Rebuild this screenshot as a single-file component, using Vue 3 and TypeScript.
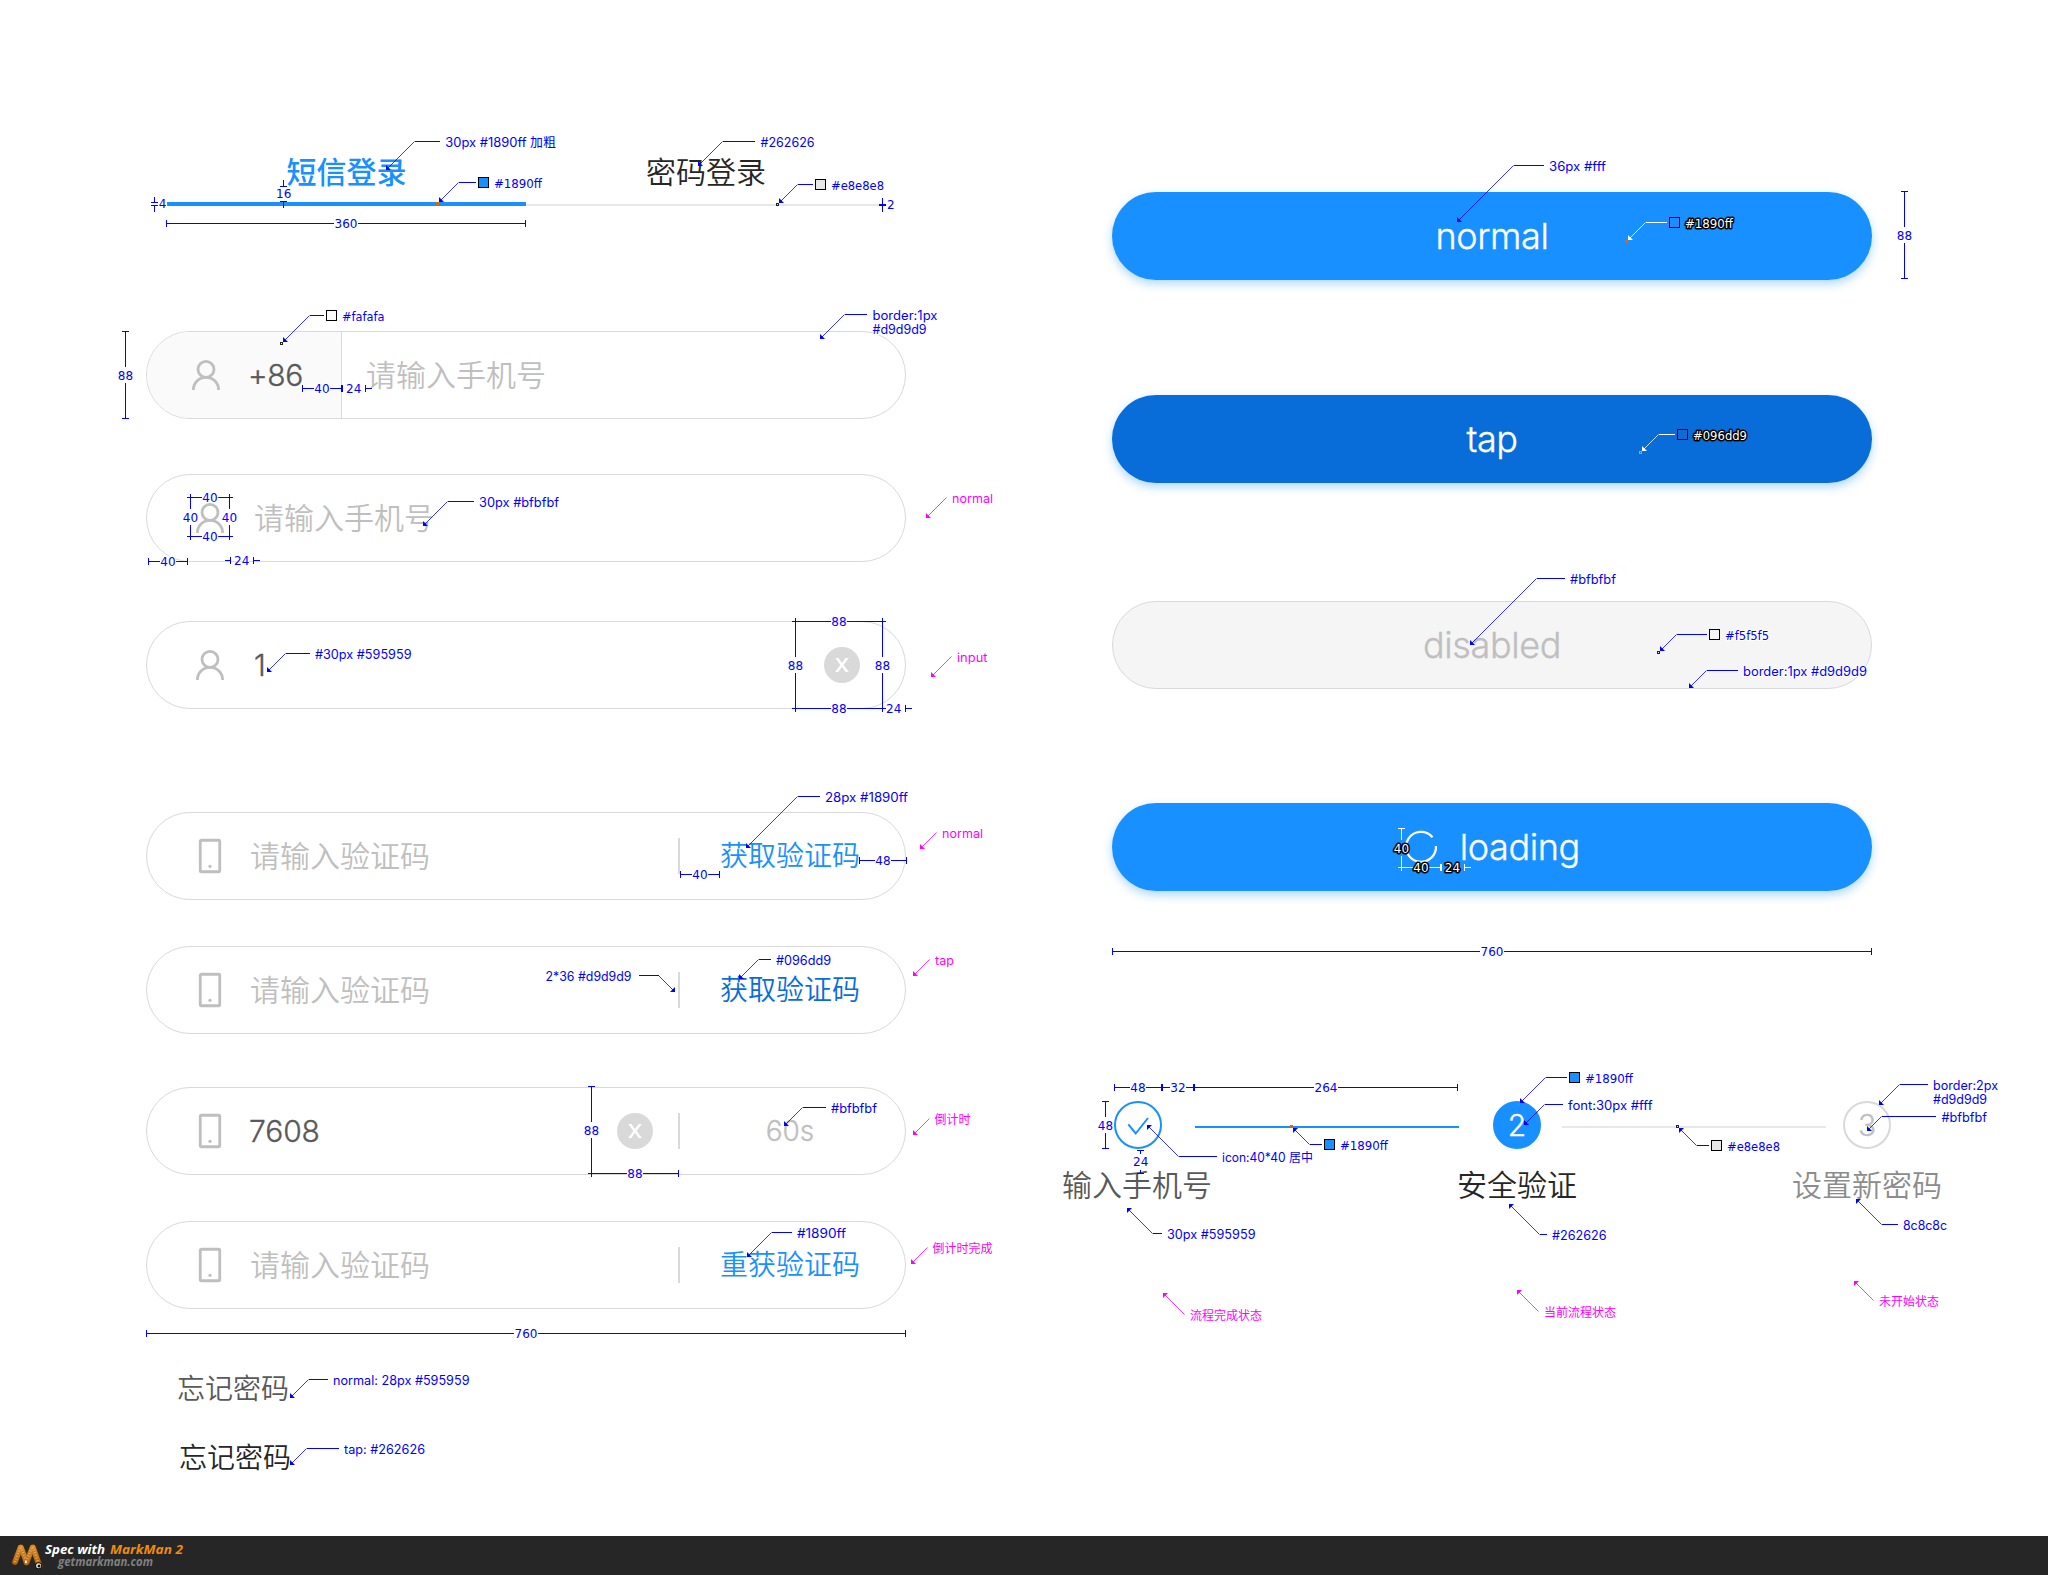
<script setup lang="ts">
type Point = [number, number]

interface Label {
  text: string
  x: number
  y: number
  w: number
}

interface Note {
  /** arrow tip, optional knee, end of the leader */
  line: Point[]
  labels: Label[]
  tone?: 'blue' | 'pink' | 'light'
  swatch?: { x: number; y: number; fill: string }
  sample?: { x: number; y: number; color: string }
}

interface Dim {
  a: Point
  b: Point
  text: string
  light?: boolean
}

interface LooseDim {
  d: string
  x: number
  y: number
  text: string
  light?: boolean
}

interface Field {
  icon: 'user' | 'phone'
  text: string
  filled?: boolean
  prefix?: string
  clear?: boolean
  action?: string
  actionTone?: string
  gap: number
}

const fields: Field[] = [
  { icon: 'user', prefix: '+86', text: '请输入手机号', gap: 125 },
  { icon: 'user', text: '请输入手机号', gap: 55 },
  { icon: 'user', text: '1', filled: true, clear: true, gap: 59 },
  { icon: 'phone', text: '请输入验证码', action: '获取验证码', actionTone: 'link', gap: 103 },
  { icon: 'phone', text: '请输入验证码', action: '获取验证码', actionTone: 'pressed', gap: 46 },
  { icon: 'phone', text: '7608', filled: true, clear: true, action: '60s', actionTone: 'muted', gap: 53 },
  { icon: 'phone', text: '请输入验证码', action: '重获验证码', actionTone: 'link', gap: 46 },
]

const O = '#d46b08'
const K = '#222'

const notes: Note[] = [
  { line: [[386, 170], [414.5, 141.5], [440, 141.5]], labels: [{ text: '30px #1890ff 加粗', x: 445.3, y: 147, w: 110.7 }] },
  { line: [[439, 202], [458.5, 182.5], [476, 182.5]], labels: [{ text: '#1890ff', x: 494, y: 188, w: 48 }], swatch: { x: 478, y: 177, fill: '#1890ff' }, sample: { x: 437.5, y: 203.5, color: O } },
  { line: [[698, 166], [722.5, 141.5], [755, 141.5]], labels: [{ text: '#262626', x: 760.5, y: 147, w: 54 }] },
  { line: [[779, 203], [797.5, 184.5], [813, 184.5]], labels: [{ text: '#e8e8e8', x: 831, y: 190, w: 53 }], swatch: { x: 815, y: 179, fill: '#e8e8e8' }, sample: { x: 777.5, y: 204.5, color: K } },
  { line: [[283, 342], [309.5, 315.5], [324, 315.5]], labels: [{ text: '#fafafa', x: 342, y: 321, w: 42.5 }], swatch: { x: 326, y: 310, fill: '#fafafa' }, sample: { x: 281.5, y: 343.5, color: K } },
  { line: [[820, 339], [844.5, 314.5], [867, 314.5]], labels: [{ text: 'border:1px', x: 872.5, y: 320, w: 65 }, { text: '#d9d9d9', x: 872.5, y: 334, w: 54 }] },
  { line: [[423, 526], [447.5, 501.5], [474, 501.5]], labels: [{ text: '30px #bfbfbf', x: 479, y: 507, w: 80 }] },
  { line: [[926, 518], [946.5, 497.5]], tone: 'pink', labels: [{ text: 'normal', x: 952, y: 503, w: 41 }] },
  { line: [[267, 672], [285.5, 653.5], [310, 653.5]], labels: [{ text: '#30px #595959', x: 315, y: 659, w: 96.5 }] },
  { line: [[931, 677], [951.5, 656.5]], tone: 'pink', labels: [{ text: 'input', x: 957, y: 662, w: 30.5 }] },
  { line: [[746, 848], [797.5, 796.5], [820, 796.5]], labels: [{ text: '28px #1890ff', x: 825, y: 802, w: 83 }] },
  { line: [[920, 849], [936.5, 832.5]], tone: 'pink', labels: [{ text: 'normal', x: 942, y: 838, w: 41 }] },
  { line: [[739, 979], [758.5, 959.5], [771, 959.5]], labels: [{ text: '#096dd9', x: 776, y: 965, w: 55 }] },
  { line: [[675, 992], [658.5, 975.5], [639, 975.5]], labels: [{ text: '2*36 #d9d9d9', x: 545.5, y: 981, w: 86 }] },
  { line: [[913, 976], [929.5, 959.5]], tone: 'pink', labels: [{ text: 'tap', x: 935, y: 965, w: 19 }] },
  { line: [[784, 1126], [802.5, 1107.5], [826, 1107.5]], labels: [{ text: '#bfbfbf', x: 831, y: 1113, w: 46 }] },
  { line: [[913, 1135], [929.5, 1118.5]], tone: 'pink', labels: [{ text: '倒计时', x: 934.5, y: 1124, w: 36 }] },
  { line: [[747, 1257], [771.5, 1232.5], [792, 1232.5]], labels: [{ text: '#1890ff', x: 797, y: 1238, w: 49 }] },
  { line: [[911, 1264], [927.5, 1247.5]], tone: 'pink', labels: [{ text: '倒计时完成', x: 932.5, y: 1253, w: 60 }] },
  { line: [[290, 1398], [308.5, 1379.5], [328, 1379.5]], labels: [{ text: 'normal: 28px #595959', x: 333, y: 1385, w: 136.5 }] },
  { line: [[290, 1465], [306.5, 1448.5], [339, 1448.5]], labels: [{ text: 'tap: #262626', x: 344, y: 1454, w: 81 }] },
  { line: [[1457, 222], [1513.5, 165.5], [1544, 165.5]], labels: [{ text: '36px #fff', x: 1549, y: 171, w: 57 }] },
  { line: [[1628, 240], [1645.5, 222.5], [1667, 222.5]], tone: 'light', labels: [{ text: '#1890ff', x: 1685, y: 228, w: 48 }], swatch: { x: 1669, y: 217, fill: '#1890ff' }, sample: { x: 1626.5, y: 241.5, color: O } },
  { line: [[1642, 451], [1658.5, 434.5], [1675, 434.5]], tone: 'light', labels: [{ text: '#096dd9', x: 1693, y: 440, w: 54 }], swatch: { x: 1677, y: 429, fill: '#096dd9' }, sample: { x: 1640.5, y: 452.5, color: '#f79a2e' } },
  { line: [[1470, 645], [1536.5, 578.5], [1565, 578.5]], labels: [{ text: '#bfbfbf', x: 1570, y: 584, w: 46 }] },
  { line: [[1660, 651], [1676.5, 634.5], [1707, 634.5]], labels: [{ text: '#f5f5f5', x: 1725, y: 640, w: 44 }], swatch: { x: 1709, y: 629, fill: '#f5f5f5' }, sample: { x: 1658.5, y: 652.5, color: K } },
  { line: [[1689, 688], [1706.5, 670.5], [1738, 670.5]], labels: [{ text: 'border:1px #d9d9d9', x: 1743, y: 676, w: 124 }] },
  { line: [[1147, 1125], [1178.5, 1156.5], [1217, 1156.5]], labels: [{ text: 'icon:40*40 居中', x: 1222, y: 1162, w: 91 }] },
  { line: [[1293, 1128], [1309.5, 1144.5], [1322, 1144.5]], labels: [{ text: '#1890ff', x: 1340, y: 1150, w: 48 }], swatch: { x: 1324, y: 1139, fill: '#1890ff' }, sample: { x: 1291.5, y: 1126.5, color: O } },
  { line: [[1127, 1208], [1152.5, 1233.5], [1162, 1233.5]], labels: [{ text: '30px #595959', x: 1167, y: 1239, w: 88.5 }] },
  { line: [[1163, 1293], [1184.5, 1314.5]], tone: 'pink', labels: [{ text: '流程完成状态', x: 1190, y: 1320, w: 72 }] },
  { line: [[1520, 1103], [1545.5, 1077.5], [1567, 1077.5]], labels: [{ text: '#1890ff', x: 1585, y: 1083, w: 48 }], swatch: { x: 1569, y: 1072, fill: '#1890ff' }, sample: { x: 1518.5, y: 1104.5, color: O } },
  { line: [[1524, 1125], [1544.5, 1104.5], [1563, 1104.5]], labels: [{ text: 'font:30px #fff', x: 1568, y: 1110, w: 84.5 }] },
  { line: [[1679, 1128], [1696.5, 1145.5], [1709, 1145.5]], labels: [{ text: '#e8e8e8', x: 1727, y: 1151, w: 53 }], swatch: { x: 1711, y: 1140, fill: '#e8e8e8' }, sample: { x: 1677.5, y: 1126.5, color: K } },
  { line: [[1879, 1105], [1899.5, 1084.5], [1928, 1084.5]], labels: [{ text: 'border:2px', x: 1933, y: 1090, w: 65 }, { text: '#d9d9d9', x: 1933, y: 1104, w: 54 }] },
  { line: [[1867, 1131], [1881.5, 1116.5], [1936, 1116.5]], labels: [{ text: '#bfbfbf', x: 1941.5, y: 1122, w: 45.5 }] },
  { line: [[1509, 1204], [1539.5, 1234.5], [1547, 1234.5]], labels: [{ text: '#262626', x: 1552, y: 1240, w: 54.5 }] },
  { line: [[1856, 1199], [1881.5, 1224.5], [1898, 1224.5]], labels: [{ text: '8c8c8c', x: 1903, y: 1230, w: 44 }] },
  { line: [[1517, 1290], [1538.5, 1311.5]], tone: 'pink', labels: [{ text: '当前流程状态', x: 1544, y: 1317, w: 72 }] },
  { line: [[1854, 1281], [1873.5, 1300.5]], tone: 'pink', labels: [{ text: '未开始状态', x: 1879, y: 1306, w: 60 }] },
]

const dims: Dim[] = [
  { a: [166.5, 223.5], b: [525.5, 223.5], text: '360' },
  { a: [125.5, 331.5], b: [125.5, 418.5], text: '88' },
  { a: [302.5, 388.5], b: [341.5, 388.5], text: '40' },
  { a: [190.5, 497.5], b: [229.5, 497.5], text: '40' },
  { a: [190.5, 536.5], b: [229.5, 536.5], text: '40' },
  { a: [190.5, 497.5], b: [190.5, 536.5], text: '40' },
  { a: [229.5, 497.5], b: [229.5, 536.5], text: '40' },
  { a: [148.5, 561.5], b: [187.5, 561.5], text: '40' },
  { a: [795.5, 621.5], b: [882.5, 621.5], text: '88' },
  { a: [795.5, 708.5], b: [882.5, 708.5], text: '88' },
  { a: [795.5, 621.5], b: [795.5, 708.5], text: '88' },
  { a: [882.5, 621.5], b: [882.5, 708.5], text: '88' },
  { a: [680.5, 874.5], b: [719.5, 874.5], text: '40' },
  { a: [859.5, 860.5], b: [906.5, 860.5], text: '48' },
  { a: [591.5, 1086.5], b: [591.5, 1173.5], text: '88' },
  { a: [591.5, 1173.5], b: [678.5, 1173.5], text: '88' },
  { a: [146.5, 1333.5], b: [905.5, 1333.5], text: '760' },
  { a: [1904.5, 191.5], b: [1904.5, 278.5], text: '88' },
  { a: [1112.5, 951.5], b: [1871.5, 951.5], text: '760' },
  { a: [1114.5, 1087.5], b: [1161.5, 1087.5], text: '48' },
  { a: [1162.5, 1087.5], b: [1193.5, 1087.5], text: '32' },
  { a: [1194.5, 1087.5], b: [1457.5, 1087.5], text: '264' },
  { a: [1105.5, 1101.5], b: [1105.5, 1148.5], text: '48' },
  { a: [1401.5, 828.5], b: [1401.5, 867.5], text: '40', light: true },
  { a: [1401.5, 867.5], b: [1440.5, 867.5], text: '40', light: true },
]

const looseDims: LooseDim[] = [
  { d: 'M283.5 180V186.5M280 186.5H287M280 201.5H287M283.5 201V208', x: 283.7, y: 193.5, text: '16' },
  { d: 'M154.5 197V202.5M151 202.5H158M151 205.5H158M154.5 205V212', x: 162.5, y: 203.8, text: '4' },
  { d: 'M882.5 198V212M879 204.5H886M879 205.5H886', x: 890.7, y: 204.8, text: '2' },
  { d: 'M342.5 385V392M365.5 385V392M365 388.5H372', x: 353.7, y: 388.5, text: '24' },
  { d: 'M225 560.5H230M230.5 557V564M253.5 557V564M253 560.5H260', x: 241.7, y: 560.5, text: '24' },
  { d: 'M905.5 705V712M905 708.5H912', x: 893.7, y: 708.5, text: '24' },
  { d: 'M1137 1150.5H1144M1140.5 1150V1154M1140.5 1170V1174M1137 1173.5H1144', x: 1140.7, y: 1161.7, text: '24' },
  { d: 'M1441.5 864V871M1464.5 864V871M1464 867.5H1471', x: 1452.5, y: 867.5, text: '24', light: true },
]

const DIGIT = 7.63

function dimPath({ a, b, text }: Dim): string {
  if (a[1] === b[1]) {
    const mid = (a[0] + b[0]) / 2
    const half = (text.length * DIGIT) / 2 + 0.6
    return (
      `M${a[0]} ${a[1] - 3.5}v7M${b[0]} ${a[1] - 3.5}v7` +
      `M${a[0]} ${a[1]}H${Math.round(mid - half)}M${Math.round(mid + half)} ${a[1]}H${b[0]}`
    )
  }
  const mid = (a[1] + b[1]) / 2
  return (
    `M${a[0] - 3.5} ${a[1]}h7M${a[0] - 3.5} ${b[1]}h7` +
    `M${a[0]} ${a[1]}V${mid - 8}M${a[0]} ${mid + 8}V${b[1]}`
  )
}

function arrowHead([tip, next]: Point[]): string {
  const sx = Math.sign(next[0] - tip[0])
  const sy = Math.sign(next[1] - tip[1])
  return `${tip[0]},${tip[1]} ${tip[0] + 5 * sx},${tip[1]} ${tip[0]},${tip[1] + 5 * sy}`
}
</script>

<template>
  <div class="page">
    <main class="board">
      <section class="inputs">
        <nav class="tabs">
          <div class="tab tab--active">短信登录</div>
          <div class="tab">密码登录</div>
        </nav>

        <div
          v-for="(f, i) in fields"
          :key="i"
          class="field"
          :class="[`field--${f.icon}`, { 'field--prefixed': f.prefix }]"
          :style="{ marginTop: f.gap + 'px' }"
        >
          <div class="lead">
            <svg v-if="f.icon === 'user'" class="icon" width="40" height="40" viewBox="0 0 40 40">
              <circle cx="20" cy="14.4" r="8" />
              <path d="M7.400 35c0-7 5.400-12.600 12.600-12.600S32.600 28 32.600 35" />
            </svg>
            <svg v-else class="icon" width="40" height="40" viewBox="0 0 40 40">
              <rect x="10.250" y="4.250" width="19.500" height="31.500" rx="1.200" />
              <circle class="dot" cx="20" cy="30.300" r="1.600" />
            </svg>
            <span v-if="f.prefix" class="prefix">{{ f.prefix }}</span>
          </div>
          <span class="value" :class="{ 'value--filled': f.filled }">{{ f.text }}</span>
          <span v-if="f.clear" class="clear">
            <svg width="36" height="36" viewBox="0 0 36 36">
              <circle cx="18" cy="18" r="18" fill="#d9d9d9" />
              <path d="M11.300 11h3.100L18 16.100 21.600 11h3.100l-5.100 6.900 5.300 7.100h-3.200L18 19.700 14.300 25h-3.200l5.300-7.100z" fill="#fff" />
            </svg>
          </span>
          <template v-if="f.action">
            <i class="split"></i>
            <span class="action" :class="`action--${f.actionTone}`">{{ f.action }}</span>
          </template>
        </div>

        <div class="forgot">忘记密码</div>
        <div class="forgot forgot--tap">忘记密码</div>
      </section>

      <section class="buttons">
        <div class="btn">normal</div>
        <div class="btn btn--tap">tap</div>
        <div class="btn btn--disabled">disabled</div>
        <div class="btn btn--loading">
          <svg class="spinner" width="40" height="40" viewBox="0 0 40 40">
            <path d="M31.500 10.200A15 15 0 1 0 35 19" />
          </svg>
          <span>loading</span>
        </div>

        <div class="steps">
          <div class="step step--done">
            <span class="badge">
              <svg width="44" height="44" viewBox="0 0 44 44">
                <path d="M12.300 21.300l7.400 9.200L32 15" />
              </svg>
            </span>
            <span class="step-name">输入手机号</span>
          </div>
          <i class="rail rail--done"></i>
          <div class="step step--current">
            <span class="badge">2</span>
            <span class="step-name">安全验证</span>
          </div>
          <i class="rail rail--next"></i>
          <div class="step step--todo">
            <span class="badge">3</span>
            <span class="step-name">设置新密码</span>
          </div>
        </div>
      </section>
    </main>

    <footer class="footer">
      <svg width="200" height="39" viewBox="0 0 200 39">
        <defs>
          <linearGradient id="worm" gradientUnits="userSpaceOnUse" x1="0" y1="8" x2="0" y2="32">
            <stop offset="0" stop-color="#d9902f" />
            <stop offset="1" stop-color="#a9610f" />
          </linearGradient>
        </defs>
        <g fill="none" stroke-linecap="round">
          <g stroke="#4d2b07" stroke-width="6.800">
            <path d="M33 11.500L39.500 30" />
            <path d="M32.500 11.500L26.500 26.500" />
            <path d="M21 11.500L26.500 26" />
            <path d="M20.500 11.500L15 26" />
          </g>
          <g stroke="url(#worm)" stroke-width="5.400">
            <path d="M33 11.500L39.500 30" />
            <path d="M32.500 11.500L26.500 26.500" />
            <path d="M21 11.500L26.500 26" />
            <path d="M20.500 11.500L15 26" />
          </g>
          <g stroke="#e8b56a" stroke-width="2.400" stroke-linecap="butt" stroke-dasharray=".8 2">
            <path d="M33 11L38 26" />
            <path d="M32 12L27 24" />
            <path d="M21 11L26.500 26" />
            <path d="M20 12L15 26" />
          </g>
        </g>
        <circle cx="26" cy="26" r="1.200" fill="#fff3d8" />
        <circle cx="38.600" cy="29.800" r="3.500" fill="#111" />
        <circle cx="38.600" cy="29.800" r="2.500" fill="#f4f4f4" />
        <circle cx="39" cy="30" r="1.500" fill="#111" />
        <text class="brand" x="45" y="18" textLength="60" lengthAdjust="spacingAndGlyphs" fill="#fff">Spec with</text>
        <text class="brand" x="110" y="18" textLength="73" lengthAdjust="spacingAndGlyphs" fill="#f08c0a">MarkMan 2</text>
        <text class="brand brand--site" x="58" y="30" textLength="95" lengthAdjust="spacingAndGlyphs">getmarkman.com</text>
      </svg>
    </footer>

    <!-- measurement and colour callouts drawn over the components -->
    <svg class="marks" width="2048" height="1536" viewBox="0 0 2048 1536">
      <g v-for="(n, i) in notes" :key="'n' + i" class="note" :class="`note--${n.tone ?? 'blue'}`">
        <line class="slope" :x1="n.line[0][0]" :y1="n.line[0][1]" :x2="n.line[1][0]" :y2="n.line[1][1]" />
        <line v-if="n.line[2]" class="flat" :x1="n.line[1][0]" :y1="n.line[1][1]" :x2="n.line[2][0]" :y2="n.line[2][1]" />
        <polygon class="head" :points="arrowHead(n.line)" />
        <rect
          v-if="n.swatch"
          class="swatch"
          :x="n.swatch.x + 0.5"
          :y="n.swatch.y + 0.5"
          width="10"
          height="10"
          :fill="n.swatch.fill"
        />
        <rect
          v-if="n.sample"
          class="sample"
          :x="n.sample.x - 1"
          :y="n.sample.y - 1"
          width="2"
          height="2"
          :stroke="n.sample.color"
        />
        <text
          v-for="l in n.labels"
          :key="l.text"
          :class="n.swatch ? 'num' : 'memo'"
          :x="l.x"
          :y="l.y"
          :textLength="l.w"
          lengthAdjust="spacingAndGlyphs"
        >{{ l.text }}</text>
      </g>

      <g v-for="(d, i) in dims" :key="'d' + i" class="dim" :class="{ 'dim--light': d.light }">
        <path :d="dimPath(d)" />
        <text class="num" :x="(d.a[0] + d.b[0]) / 2" :y="(d.a[1] + d.b[1]) / 2 + 4.5">{{ d.text }}</text>
      </g>
      <g v-for="(d, i) in looseDims" :key="'l' + i" class="dim" :class="{ 'dim--light': d.light }">
        <path :d="d.d" />
        <text class="num" :x="d.x" :y="d.y + 4.5">{{ d.text }}</text>
      </g>
    </svg>
  </div>
</template>

<style>
body {
  background: #fff;
}
</style>

<style scoped>
.page {
  position: relative;
  display: flex;
  flex-direction: column;
  width: 2048px;
  height: 1575px;
  overflow: hidden;
  background: #fff;
  font-family: Inter, 'Noto Sans CJK SC', sans-serif;
  font-weight: 350;
}

.board {
  flex: 1;
  display: flex;
  align-items: flex-start;
  gap: 206px;
  padding-left: 146px;
}

.inputs {
  width: 760px;
  padding-top: 152px;
}

.tabs {
  display: flex;
  align-items: flex-end;
  width: 719px;
  margin-left: 21px;
}

.tab {
  box-sizing: border-box;
  width: 360px;
  height: 54px;
  border-bottom: 2px solid #e8e8e8;
  color: #262626;
  font-size: 30px;
  line-height: 41px;
  text-align: center;
}

.tab--active {
  width: 359px;
  border-bottom: 4px solid #1890ff;
  color: #1890ff;
  font-weight: 500;
}

.field {
  box-sizing: border-box;
  display: flex;
  align-items: center;
  height: 88px;
  overflow: hidden;
  border: 1px solid #d9d9d9;
  border-radius: 44px;
  font-size: 30px;
  line-height: 40px;
}

.lead {
  display: flex;
  align-items: center;
  padding-left: 43px;
}

.icon {
  display: block;
  flex: none;
  fill: none;
  stroke: #bfbfbf;
  stroke-width: 2.8;
}

.dot {
  fill: #bfbfbf;
  stroke: none;
}

.field--prefixed .lead {
  box-sizing: border-box;
  width: 195px;
  height: 86px;
  padding-left: 39px;
  border-right: 1px solid #d9d9d9;
  background: #fafafa;
}

.prefix,
.value--filled,
.action--muted,
.btn,
.badge {
  -webkit-text-stroke: 0.35px currentColor;
}

.prefix {
  margin-left: 22px;
  color: #595959;
  letter-spacing: -0.400px;
}

.value {
  flex: 1;
  margin-left: 24px;
  color: #bfbfbf;
}

.field--phone .value {
  margin-left: 20px;
}

.field--phone .value--filled {
  margin-left: 19px;
}

.value--filled {
  color: #595959;
  letter-spacing: -0.100px;
}

.clear {
  display: flex;
  align-items: center;
  justify-content: center;
  width: 88px;
  margin-right: 19px;
}

.field--phone .clear {
  margin-right: -1px;
}

.split {
  width: 2px;
  height: 36px;
  background: #d9d9d9;
}

.action {
  width: 140px;
  margin: 0 45px 0 40px;
  font-size: 28px;
  text-align: center;
}

.action--link {
  color: #1890ff;
}

.action--pressed {
  color: #096dd9;
}

.action--muted {
  color: #bfbfbf;
}

.forgot {
  margin: 60px 0 0 31px;
  color: #595959;
  font-size: 28px;
  line-height: 40px;
}

.forgot--tap {
  margin: 29px 0 0 33px;
  color: #262626;
}

.buttons {
  display: flex;
  flex-direction: column;
  width: 760px;
  padding-top: 192px;
}

.btn {
  box-sizing: border-box;
  display: flex;
  align-items: center;
  justify-content: center;
  height: 88px;
  border-radius: 44px;
  background: #1890ff;
  box-shadow: 0 4px 10px rgba(24, 144, 255, 0.35);
  color: #fff;
  font-size: 36px;
  line-height: 40px;
  letter-spacing: -0.400px;
}

.btn--tap {
  margin-top: 115px;
  background: #096dd9;
}

.btn--disabled {
  margin-top: 118px;
  border: 1px solid #d9d9d9;
  background: #f5f5f5;
  box-shadow: none;
  color: #bfbfbf;
}

.btn--loading {
  gap: 18.500px;
  margin-top: 114px;
  padding-right: 3px;
}

.spinner {
  fill: none;
  stroke: #fff;
  stroke-width: 2.2;
}

.steps {
  display: flex;
  align-items: flex-start;
  width: 880px;
  margin: 210px 0 0 -50px;
}

.step {
  display: flex;
  flex-direction: column;
  align-items: center;
  flex: none;
  width: 150px;
}

.badge {
  box-sizing: border-box;
  display: flex;
  align-items: center;
  justify-content: center;
  width: 48px;
  height: 48px;
  border: 2px solid #1890ff;
  border-radius: 50%;
  font-size: 30px;
  line-height: 30px;
}

.badge svg {
  flex: none;
  fill: none;
  stroke: #1890ff;
  stroke-width: 2;
}

.step-name {
  margin-top: 16px;
  font-size: 30px;
  line-height: 40px;
}

.step--done {
  color: #595959;
}

.step--done .badge {
  margin-left: 2px;
}

.step--current {
  width: 120px;
  color: #262626;
}

.step--current .badge {
  background: #1890ff;
  color: #fff;
}

.step--todo {
  color: #8c8c8c;
}

.step--todo .badge {
  border-color: #d9d9d9;
  color: #bfbfbf;
}

.rail {
  flex: none;
  width: 264px;
  height: 2px;
  margin-top: 25px;
}

.rail--done {
  margin-right: -2px;
  margin-left: -17px;
  background: #1890ff;
}

.rail--next {
  margin-right: -34px;
  margin-left: -15px;
  background: #e8e8e8;
}

.footer {
  flex: none;
  height: 39px;
  background: #262626;
}

.footer svg {
  display: block;
}

.brand {
  font: italic 700 12.500px 'Open Sans', sans-serif;
}

.brand--site {
  fill: #808080;
  font-size: 12px;
}

.marks {
  position: absolute;
  top: 0;
  left: 0;
  color: #00f;
}

.note--pink {
  color: #f0f;
}

.note--light,
.dim--light {
  color: #fff;
}

.slope {
  stroke: currentColor;
  stroke-width: 0.8;
}

.flat,
.dim path {
  fill: none;
  stroke: currentColor;
  stroke-width: 1;
  shape-rendering: crispEdges;
}

.head {
  fill: currentColor;
}

.swatch {
  stroke: #000;
  stroke-width: 1;
}

.sample {
  fill: none;
  stroke-width: 1;
}

.marks text {
  fill: currentColor;
  stroke: #fff;
  stroke-width: 2px;
  stroke-linejoin: round;
  paint-order: stroke;
  font-weight: 400;
}

.marks .note--light text,
.marks .dim--light text {
  stroke: #000;
  stroke-width: 3px;
}

.marks .memo {
  font-family: Inter, 'Noto Sans CJK SC', sans-serif;
  font-size: 12.500px;
  font-feature-settings: 'calt' 0;
}

.marks .note--pink .memo {
  font-size: 12px;
}

.num {
  font-family: 'DejaVu Sans', sans-serif;
  font-size: 12px;
}

.dim text {
  text-anchor: middle;
}
</style>
